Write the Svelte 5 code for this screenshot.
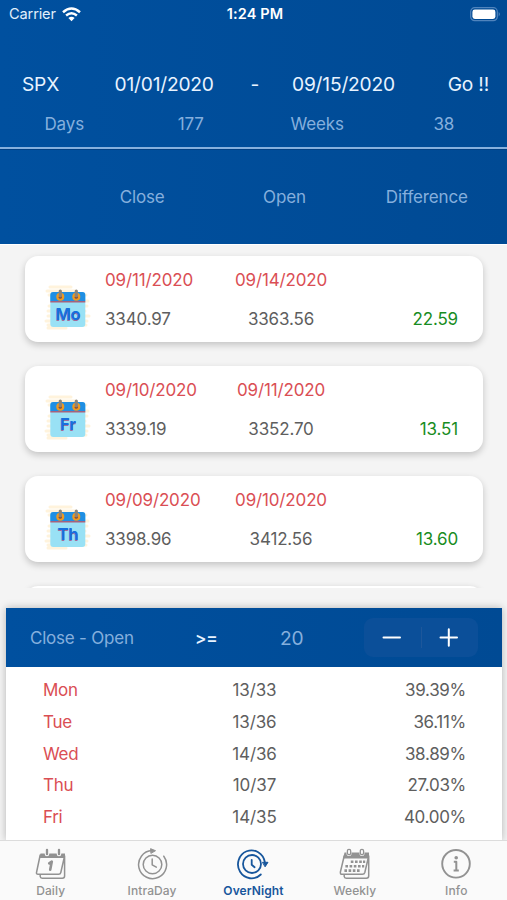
<script>
  const trades = [
    { day: 'Mo', closeDate: '09/11/2020', openDate: '09/14/2020', close: '3340.97', open: '3363.56', diff: '22.59' },
    { day: 'Fr', closeDate: '09/10/2020', openDate: '09/11/2020', close: '3339.19', open: '3352.70', diff: '13.51' },
    { day: 'Th', closeDate: '09/09/2020', openDate: '09/10/2020', close: '3398.96', open: '3412.56', diff: '13.60' }
  ];
  const stats = [
    ['Mon', '13/33', '39.39%'],
    ['Tue', '13/36', '36.11%'],
    ['Wed', '14/36', '38.89%'],
    ['Thu', '10/37', '27.03%'],
    ['Fri', '14/35', '40.00%']
  ];
  const tabs = ['Daily', 'IntraDay', 'OverNight', 'Weekly', 'Info'];
  const active = 'OverNight';
</script>

<div class="screen">
  <header>
    <div class="status">
      <span class="carrier">Carrier
        <svg width="19" height="15" viewBox="0 0 19 15" fill="none" stroke="#fff" stroke-width="2.5">
          <path d="M1 5.2Q9.5-2.2 18 5.2" /><path d="M4.1 8.5Q9.5 4 14.9 8.5" />
          <path d="M6.4 11.1Q9.5 8.6 12.6 11.1L9.5 14.2Z" fill="#fff" stroke="none" />
        </svg>
      </span>
      <span class="time">1:24 PM</span>
      <svg class="battery" width="31" height="15" viewBox="0 0 31 15">
        <rect x="0.7" y="0.7" width="26.6" height="13" rx="4" fill="none" stroke="#5084bd" stroke-width="1.2" />
        <rect x="2.4" y="2.5" width="23" height="9.4" rx="2.4" fill="#fff" />
        <path d="M28.7 5Q31 7.2 28.7 9.5Z" fill="#5084bd" />
      </svg>
    </div>
    <div class="query">
      <span class="symbol">SPX</span><span class="from">01/01/2020</span><span class="dash">-</span><span class="to">09/15/2020</span><span class="go">Go !!</span>
    </div>
    <div class="totals"><span>Days</span><span>177</span><span>Weeks</span><span>38</span></div>
    <div class="columns"><span>Close</span><span>Open</span><span>Difference</span></div>
  </header>

  <main>
    <div class="list">
      {#each trades as t}
        <article>
          <svg class="cal" width="48" height="48" viewBox="0 0 48 48">
            <g stroke="#fff3dc" stroke-width="3" stroke-linecap="round">
              <path d="M6 4H27M3 8H31M5 12H42M8 18H44M5 23H43M4 28H41M4 33H45M2 38H43M4 42H42M4 45H22" />
            </g>
            <rect x="6.3" y="9" width="35" height="35" rx="3" fill="#99e1f5" />
            <path d="M6.3 18V12a3 3 0 0 1 3-3H38.3a3 3 0 0 1 3 3v6Z" fill="#1f8fe3" />
            <path d="M6.3 18.8H41.3" stroke="#a5627e" stroke-width="1.5" />
            <circle cx="16.3" cy="13.8" r="4" fill="#ef9a20" /><circle cx="32.3" cy="13.8" r="4" fill="#ef9a20" />
            <circle cx="16.3" cy="14.2" r="1.6" fill="#814d44" /><circle cx="32.3" cy="14.2" r="1.6" fill="#814d44" />
            <path d="M16.3 8V12.7M32.3 8V12.7" stroke="#8a8379" stroke-width="3.2" stroke-linecap="round" />
            <text x="24" y="38" text-anchor="middle" class="shade">{t.day}</text>
            <text x="24" y="37.2" text-anchor="middle" class="day">{t.day}</text>
          </svg>
          <div class="cell left"><b>{t.closeDate}</b><span>{t.close}</span></div>
          <div class="cell mid"><b>{t.openDate}</b><span>{t.open}</span></div>
          <div class="diff">{t.diff}</div>
        </article>
      {/each}
      <div class="next"></div>
    </div>

    <section class="panel">
      <div class="filter">
        <span class="label">Close - Open</span><span class="op">&gt;=</span><span class="limit">20</span>
        <div class="stepper">
          <svg width="57" height="39" viewBox="0 0 57 39"><path d="M19.5 19.5H36" stroke="#fff" stroke-width="2" stroke-linecap="round" /></svg>
          <i></i>
          <svg width="57" height="39" viewBox="0 0 57 39"><path d="M19.5 19.5H36M27.8 11.3V27.7" stroke="#fff" stroke-width="2" stroke-linecap="round" /></svg>
        </div>
      </div>
      <div class="rows">
        {#each stats as [day, ratio, pct]}
          <div class="row"><span class="red">{day}</span><span class="ratio">{ratio}</span><span class="pct">{pct}</span></div>
        {/each}
      </div>
    </section>
  </main>

  <nav>
    {#each tabs as tab}
      <div class="tab" class:active={tab === active}>
        <svg width="34" height="32" viewBox="0 0 34 32" fill="none" stroke="currentColor" stroke-width="1.5" stroke-linecap="round" stroke-linejoin="round">
          {#if tab === 'Daily'}
            <path d="M6.5 5.5H31V10H5.5Z" fill="currentColor" stroke="none" />
            <path d="M6.2 7 2.5 24.5Q2.2 26.3 4 26.3H24.6Q26.4 26.3 26.8 24.5L30.6 8V28Q30.6 30.2 28.4 30.2H8.2Q6.4 30.2 6.2 28.5V27" />
            <path d="M13 1.5V6M25 1.5V6" stroke="#fafafa" stroke-width="4.6" />
            <path d="M13 1.8V6.2M25 1.8V6.2" stroke-width="2.3" />
            <path d="M15.2 15.3 17.8 13.6 16.2 21.8" stroke-width="2.6" />
          {:else if tab === 'IntraDay'}
            <circle cx="17.5" cy="16.5" r="9.3" />
            <path d="M17 2.6A14 14 0 1 0 28.8 8.2" />
            <path d="M17.2 11V16.8L21.3 19.2" />
            <path d="M15.9.8 20.5 2.7 16.2 5.2Z" fill="currentColor" stroke-width="1" />
          {:else if tab === 'OverNight'}
            <circle cx="16" cy="16" r="9" stroke-width="1.8" />
            <path d="M28.8 14A13.5 14 0 1 0 24.8 26.5" stroke-width="1.8" />
            <path d="M15.7 11.8V16.8L18.6 19.2" stroke-width="1.8" />
            <path d="M26.8 14.3H32L29.3 18.5Z" fill="currentColor" stroke-width="1" />
          {:else if tab === 'Weekly'}
            <path d="M6.5 4.5H31V10.5H5Z" fill="currentColor" stroke="none" />
            <path d="M6.2 8 2.4 24Q2 26.3 4 26.3H24.4Q26.3 26.3 26.8 24.5L30.7 8V28Q30.7 30.2 28.4 30.2H8.2Q6.4 30.2 6.2 28.5V27" />
            <path d="M11 2V5.5M24 2V5.5" stroke="#fafafa" stroke-width="5" />
            <rect x="9.4" y="1.3" width="3.3" height="5.4" rx="1.6" stroke-width="1.3" /><rect x="22.3" y="1.3" width="3.3" height="5.4" rx="1.6" stroke-width="1.3" />
            <path d="M12.8 13.8H15.4M17 13.8H19.6M21.2 13.8H23.8M25 13.8H27.2M7.4 18.3H10M11.6 18.3H14.2M15.8 18.3H18.4M20 18.3H22.6M24 18.3H26.2M6.4 22.6H9M10.6 22.6H13.2M14.8 22.6H17.4M19 22.6H21.6" stroke-width="2.6" stroke-linecap="butt" />
          {:else}
            <circle cx="17" cy="15.8" r="13.8" stroke-width="1.9" />
            <circle cx="17.2" cy="9.8" r="1.8" fill="currentColor" stroke="none" />
            <path d="M14.8 13.8H17.3V22.2M14.6 22.4H19.8" stroke-width="2" stroke-linecap="butt" />
          {/if}
        </svg>
        <span>{tab}</span>
      </div>
    {/each}
  </nav>
</div>

<style>
  :global(body) { margin: 0; }
  .screen { width: 507px; height: 900px; overflow: hidden; display: flex; flex-direction: column; background: #f4f4f4; color: #5e5e5e; font: 17px/22px Inter, "Liberation Sans", sans-serif; letter-spacing: -.15px; }
  .screen * { box-sizing: border-box; }
  svg { display: block; flex: none; }
  span, b { white-space: nowrap; }
  header { height: 244px; flex: none; background: linear-gradient(90deg, #00509f, #004a94); color: #85afdd; }
  .status { height: 28px; padding: 0 6px 0 9px; display: grid; grid-template-columns: 1fr auto 1fr; align-items: center; color: #fff; font-size: 14.6px; }
  .carrier { display: flex; align-items: center; gap: 6px; color: #e2effc; }
  .time { font-weight: 600; font-size: 14.5px; letter-spacing: .15px; }
  .battery { justify-self: end; }
  .query { height: 80px; padding: 32px 18px 0 22px; display: grid; grid-template-columns: 92.5px 136px 41.5px 1fr auto; align-items: center; color: #e8f3ff; font-size: 19.2px; letter-spacing: -.2px; }
  .totals { height: 41px; padding: 0 0 8px 1px; display: grid; grid-template-columns: repeat(4, 1fr); align-items: center; text-align: center; border-bottom: 2px solid #86b0dd; }
  .columns { height: 95px; padding: 0 9px 0 71px; display: grid; grid-template-columns: repeat(3, 1fr); align-items: center; text-align: center; border-top: 1px solid #003f83; }
  main { height: 596px; flex: none; display: flex; flex-direction: column; overflow: hidden; }
  .list { height: 344px; flex: none; padding: 11px 24px 0 25px; overflow: hidden; display: flex; flex-direction: column; gap: 24px; border-top: 1px solid #fff; }
  article { height: 86px; flex: none; background: #fff; border-radius: 13px; box-shadow: 0 3px 7px #0003; display: grid; grid-template-columns: 80px 106px 140px 1fr; }
  .next { height: 30px; flex: none; background: #fff; border-radius: 13px; box-shadow: 0 2px 6px #0003; }
  .cal { margin: 27px 0 0 19px; }
  .cal text { font: 700 16.5px Inter, sans-serif; }
  .shade { fill: #a36b9b; }
  .day { fill: #176fdd; }
  .cell { display: flex; flex-direction: column; padding-top: 13px; gap: 17px; }
  .mid { align-items: center; }
  b, .red { font-weight: 400; color: #da4e54; }
  .diff { color: #188c22; text-align: right; padding: 52px 25px 0 0; }
  .panel { margin: 20px 5px 0 6px; height: 232px; flex: none; background: #fff; box-shadow: 0 0 8px #0004; }
  .filter { height: 58.5px; display: grid; grid-template-columns: 165px 85px 84px 114px; align-items: center; padding-left: 24px; background: linear-gradient(90deg, #00509f, #004a94); color: #85afdd; }
  .label, .op, .limit { padding-top: 1px; }
  .label { letter-spacing: -.22px; }
  .op { color: #e8f3ff; font-weight: 600; }
  .limit { font-size: 19.2px; }
  .stepper { height: 39px; border-radius: 9px; background: #0b4f99; display: flex; align-items: center; }
  .stepper i { width: 1px; height: 21px; margin: 0 -.5px; background: #1d579b; }
  .rows { padding-top: 7.7px; }
  .row { height: 31.8px; padding: 0 36px 0 37px; display: grid; grid-template-columns: 1fr auto 1fr; align-items: center; }
  .row { letter-spacing: -.3px; }
  .ratio { letter-spacing: -.1px; }
  .pct { text-align: right; }
  nav { height: 60px; flex: none; display: grid; grid-template-columns: repeat(5, 1fr); background: #fafafa; border-top: 1px solid #dcdcdc; }
  .tab { display: flex; flex-direction: column; align-items: center; padding-top: 7px; color: #929292; font-size: 12px; font-weight: 500; line-height: 16px; gap: 3px; letter-spacing: .1px; }
  .tab.active { color: #17569c; font-weight: 600; }
</style>
